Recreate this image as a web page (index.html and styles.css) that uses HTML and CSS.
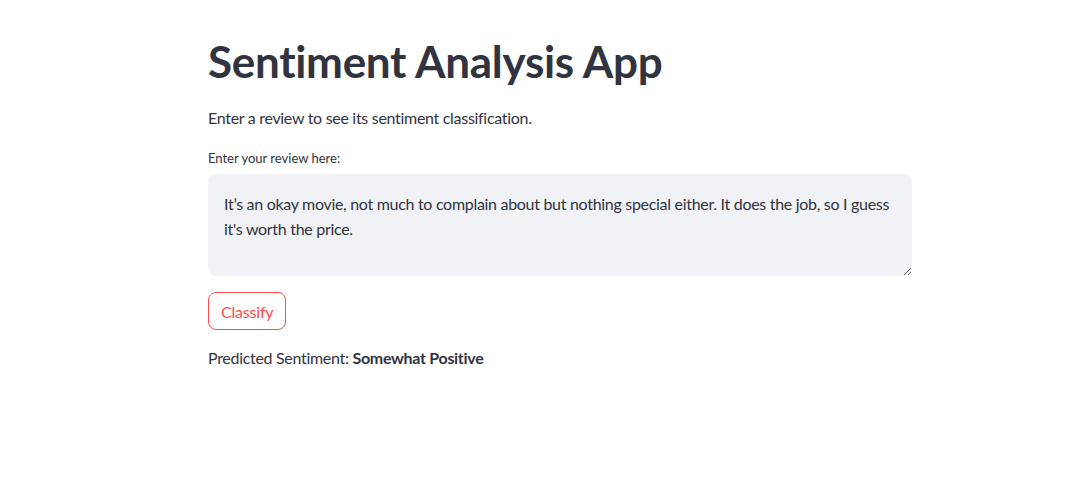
FILE: index.html
```html
<!DOCTYPE html>
<html lang="en">
<head>
<meta charset="utf-8">
<title>Sentiment Analysis App</title>
<link rel="stylesheet" href="styles.css">
</head>
<body>
<main class="container">
  <h1 class="title">Sentiment Analysis App</h1>
  <p class="intro">Enter a review to see its sentiment classification.</p>
  <div class="field">
    <label class="label" for="review">Enter your review here:</label>
    <textarea id="review" class="review">It’s an okay movie, not much to complain about but nothing special either. It does the job, so I guess it's worth the price.</textarea>
  </div>
  <button class="btn" type="button">Classify</button>
  <p class="result">Predicted Sentiment: <strong>Somewhat Positive</strong></p>
</main>
</body>
</html>
```

FILE: styles.css
```css
html, body {
  margin: 0;
  padding: 0;
  background: #ffffff;
}
body {
  font-family: Lato, "Noto Sans", sans-serif;
  color: #31333f;
  letter-spacing: -0.3px;
}
.container {
  width: 704px;
  margin: 0 0 0 208px;
  padding-top: 33px;
  display: flex;
  flex-direction: column;
  align-items: flex-start;
}
.title {
  margin: 0;
  font-size: 44px;
  line-height: 56px;
  font-weight: 700;
  letter-spacing: -0.3px;
}
.intro {
  margin: 17px 0 0;
  font-size: 16px;
  line-height: 24px;
}
.field {
  width: 100%;
  margin-top: 19px;
  display: flex;
  flex-direction: column;
}
.label {
  font-size: 13px;
  line-height: 18px;
  margin-bottom: 7px;
  letter-spacing: 0;
}
.review {
  box-sizing: border-box;
  width: 100%;
  height: 102px;
  border: none;
  border-radius: 8px;
  background: #f0f2f6;
  color: #31333f;
  font-family: inherit;
  font-size: 16px;
  letter-spacing: -0.3px;
  line-height: 25px;
  padding: 17px 16px 16px;
  resize: vertical;
  outline: none;
}
.btn {
  margin-top: 16px;
  height: 38px;
  padding: 0 12px;
  border: 1px solid #ff4b4b;
  border-radius: 8px;
  background: #ffffff;
  color: #ff4b4b;
  font-family: inherit;
  font-size: 16px;
  letter-spacing: -0.2px;
}
.result {
  margin: 16px 0 0;
  font-size: 16px;
  line-height: 24px;
}
.result strong {
  font-weight: 700;
}
```
